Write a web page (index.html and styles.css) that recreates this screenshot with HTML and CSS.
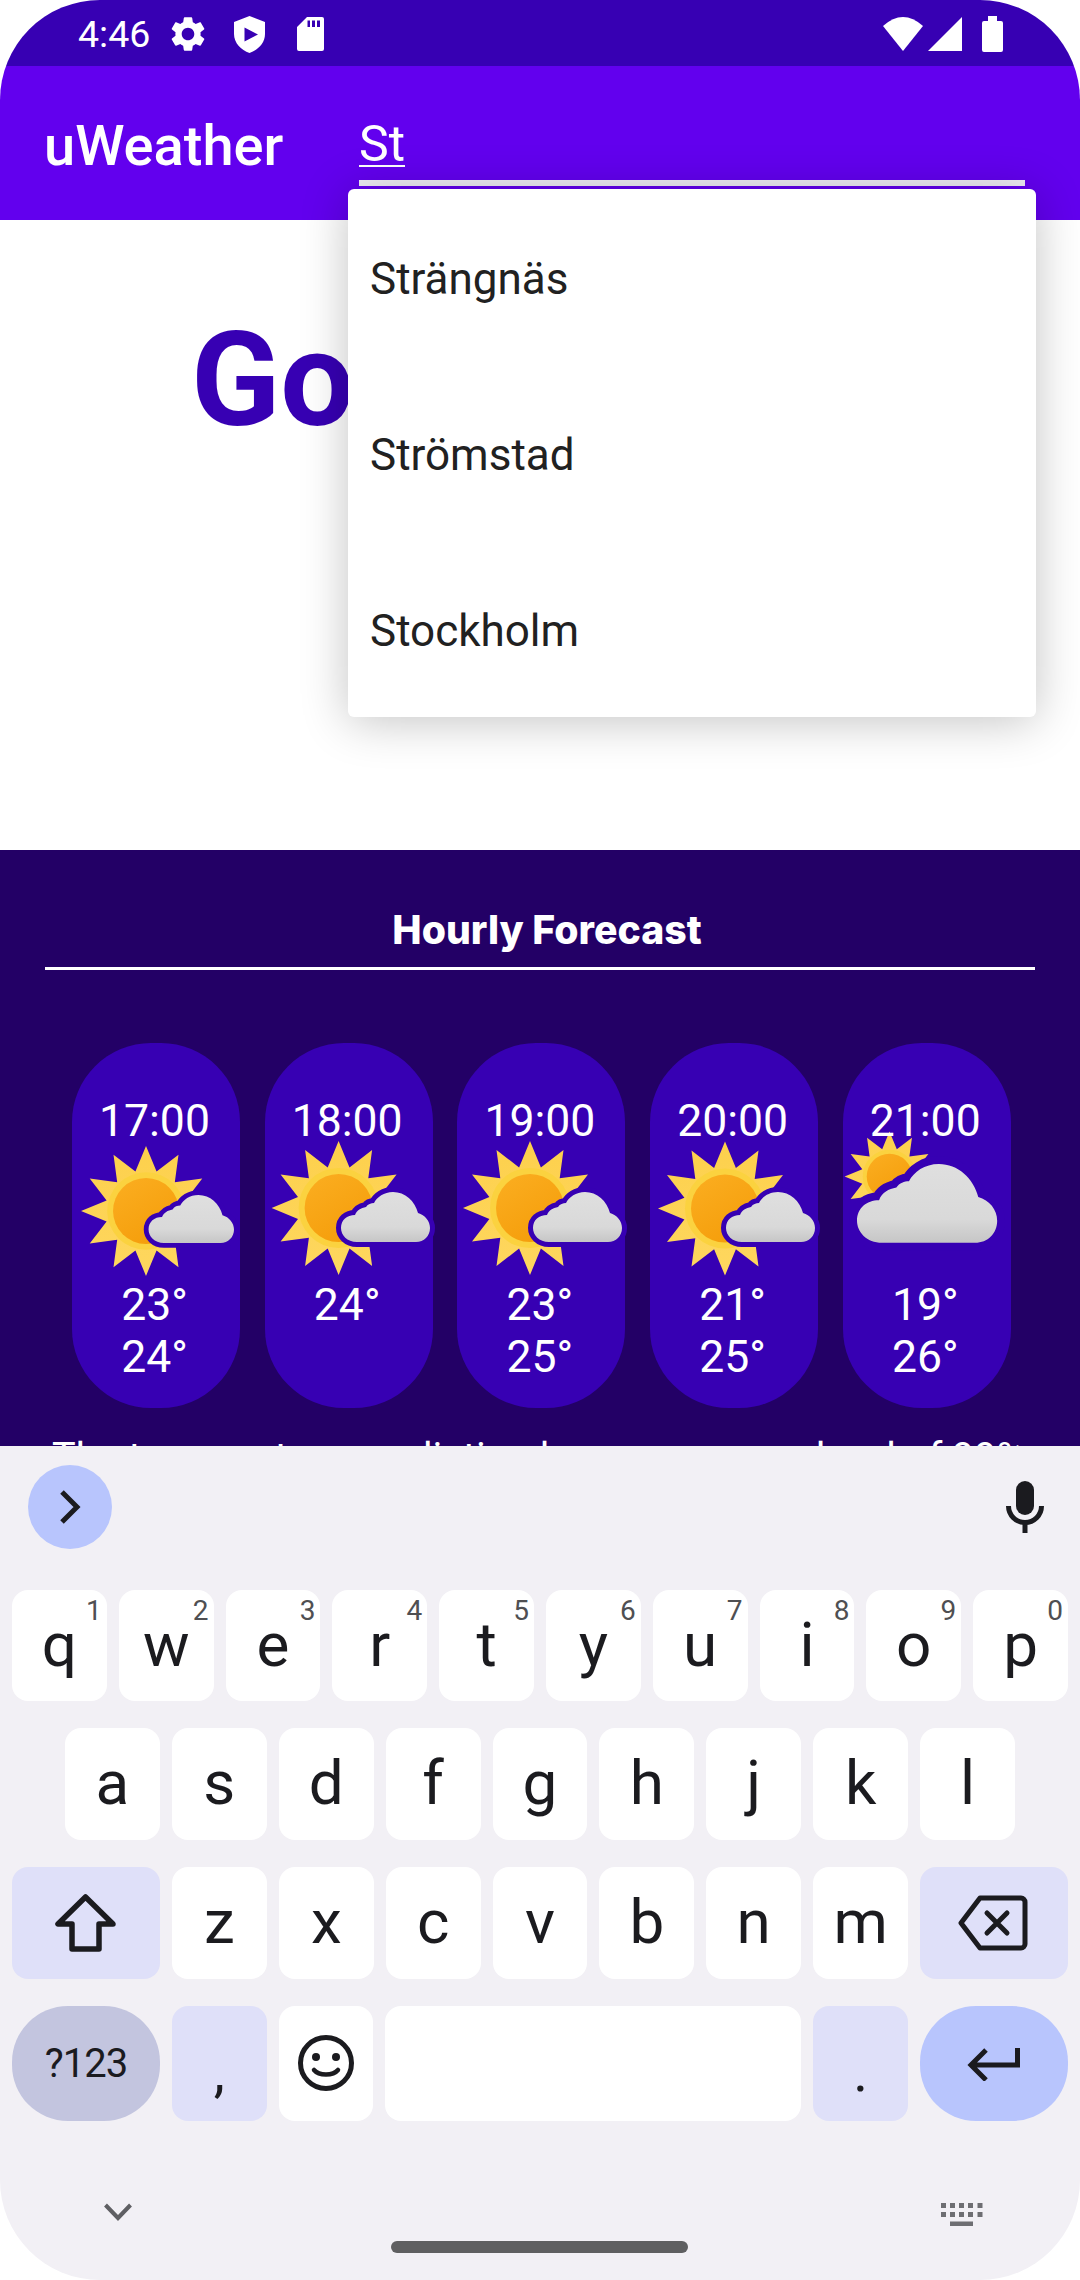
FILE: index.html
```html
<!DOCTYPE html>
<html lang="en">

<head>
  <meta charset="UTF-8">
  <meta name="viewport" content="width=device-width, initial-scale=1.0">
  <title>uWeather</title>
  <link rel="stylesheet" href="styles.css">
</head>

<body>
  <svg class="sprite" aria-hidden="true">
    <defs>
      <linearGradient id="disc" x1="0" y1="0" x2="0.6" y2="1">
        <stop offset="0" stop-color="#fbae21" />
        <stop offset="1" stop-color="#f59e0b" />
      </linearGradient>
      <linearGradient id="rays" x1="0" y1="0" x2="0" y2="1">
        <stop offset="0" stop-color="#fdd04c" />
        <stop offset="1" stop-color="#fed75f" />
      </linearGradient>
      <linearGradient id="puff" x1="0" y1="0" x2="0" y2="1">
        <stop offset="0" stop-color="#dfdfdf" />
        <stop offset="0.7" stop-color="#d9d9d9" />
        <stop offset="1" stop-color="#c6c6c6" />
      </linearGradient>
      <g id="sun">
        <polygon fill="url(#rays)" points="0,-67 10.9,-40.6 33.5,-58 29.7,-29.7 58,-33.5 40.6,-10.9 67,0 40.6,10.9 58,33.5 29.7,29.7 33.5,58 10.9,40.6 0,67 -10.9,40.6 -33.5,58 -29.7,29.7 -58,33.5 -40.6,10.9 -67,0 -40.6,-10.9 -58,-33.5 -29.7,-29.7 -33.5,-58 -10.9,-40.6" />
        <circle r="40" fill="#fbd23f" />
        <circle r="34" fill="url(#disc)" />
      </g>
      <path id="cloud" fill="url(#puff)" stroke="#3700b3" stroke-width="10" paint-order="stroke" d="M92 103C82 103 76 96 76 89C76 81 82 76 90 76C92 71 96 69 101 68C103 65 106 64 109 64C112 58 119 53 128 53C140 53 150 62 153 74C160 76 165 82 165 89C165 97 159 103 151 103Z" />
    </defs>
  </svg>

  <div class="screen">
    <div class="status-bar">
      <span class="status-time">4:46</span>
      <svg class="ic-gear" viewBox="0 0 24 24">
        <path fill="#fff" d="M19.14 12.94c.04-.3.06-.61.06-.94 0-.32-.02-.64-.07-.94l2.03-1.58c.18-.14.23-.41.12-.61l-1.92-3.32c-.12-.22-.37-.29-.59-.22l-2.39.96c-.5-.38-1.03-.7-1.62-.94l-.36-2.54c-.04-.24-.24-.41-.48-.41h-3.84c-.24 0-.43.17-.47.41l-.36 2.54c-.59.24-1.13.57-1.62.94l-2.39-.96c-.22-.08-.47 0-.59.22L2.74 8.87c-.12.21-.08.47.12.61l2.03 1.58c-.05.3-.09.63-.09.94s.02.64.07.94l-2.03 1.58c-.18.14-.23.41-.12.61l1.92 3.32c.12.22.37.29.59.22l2.39-.96c.5.38 1.03.7 1.62.94l.36 2.54c.05.24.24.41.48.41h3.84c.24 0 .44-.17.47-.41l.36-2.54c.59-.24 1.13-.56 1.62-.94l2.39.96c.22.08.47 0 .59-.22l1.92-3.32c.12-.22.07-.47-.12-.61l-2.01-1.58zM12 15.6c-1.98 0-3.6-1.62-3.6-3.6s1.62-3.6 3.6-3.6 3.6 1.62 3.6 3.6-1.62 3.6-3.6 3.6z" />
      </svg>
      <svg class="ic-shield" viewBox="0 0 31 37">
        <path fill="#fff" fill-rule="evenodd" d="M15.5 0L31 6V18C31 27 24 34 15.5 37C7 34 0 27 0 18V6ZM10.5 11.5V25.5L24 18.5Z" />
      </svg>
      <svg class="ic-sd" viewBox="0 0 27 34">
        <path fill="#fff" fill-rule="evenodd" d="M10 0H25a2 2 0 0 1 2 2V32a2 2 0 0 1-2 2H2a2 2 0 0 1-2-2V10ZM10.500 3.500V10H13V3.500ZM15 3.500V10H18V3.500ZM20 3.500V10H23V3.500Z" />
      </svg>
      <span class="status-gap"></span>
      <svg class="ic-wifi" viewBox="0 0 40 34">
        <path fill="#fff" d="M0 9Q20 -9 40 9L20 34Z" />
      </svg>
      <svg class="ic-signal" viewBox="0 0 34 34">
        <path fill="#fff" d="M34 0V34H0Z" />
      </svg>
      <svg class="ic-battery" viewBox="0 0 21 36">
        <path fill="#fff" d="M6 0H15V5H19a2 2 0 0 1 2 2V34a2 2 0 0 1-2 2H2a2 2 0 0 1-2-2V7a2 2 0 0 1 2-2H6Z" />
      </svg>
    </div>

    <header class="app-bar">
      <div class="app-title">uWeather</div>
      <div class="search-field"><span class="search-text">St</span></div>
    </header>

    <section class="greeting">
      <h1 class="greeting-text">Go</h1>
    </section>

    <section class="hourly">
      <h2 class="hourly-title">Hourly Forecast</h2>
      <div class="hour-list">
        <div class="hour-card">
          <div class="hour-time">17:00</div>
          <svg class="hour-icon" viewBox="0 0 168 148">
            <use href="#sun" transform="translate(74 72) scale(.97)" />
            <use href="#cloud" transform="translate(3.600 5.100) scale(.96)" />
          </svg>
          <div class="hour-temp">23°</div>
          <div class="hour-temp">24°</div>
        </div>
        <div class="hour-card">
          <div class="hour-time">18:00</div>
          <svg class="hour-icon" viewBox="0 0 168 148">
            <use href="#sun" transform="translate(73.600 69)" />
            <use href="#cloud" />
          </svg>
          <div class="hour-temp">24°</div>
        </div>
        <div class="hour-card">
          <div class="hour-time">19:00</div>
          <svg class="hour-icon" viewBox="0 0 168 148">
            <use href="#sun" transform="translate(73 69)" />
            <use href="#cloud" />
          </svg>
          <div class="hour-temp">23°</div>
          <div class="hour-temp">25°</div>
        </div>
        <div class="hour-card">
          <div class="hour-time">20:00</div>
          <svg class="hour-icon" viewBox="0 0 168 148">
            <use href="#sun" transform="translate(75 69.600)" />
            <use href="#cloud" />
          </svg>
          <div class="hour-temp">21°</div>
          <div class="hour-temp">25°</div>
        </div>
        <div class="hour-card">
          <div class="hour-time">21:00</div>
          <svg class="hour-icon" viewBox="0 0 168 148">
            <use href="#sun" transform="translate(46.500 37.500) scale(.67)" />
            <use href="#cloud" transform="translate(-105.700 -58.500) scale(1.575)" />
          </svg>
          <div class="hour-temp">19°</div>
          <div class="hour-temp">26°</div>
        </div>
      </div>
      <p class="hourly-note">The temperature prediction has an average level of 99%</p>
    </section>

    <ul class="suggestions">
      <li>Strängnäs</li>
      <li>Strömstad</li>
      <li>Stockholm</li>
    </ul>

    <div class="keyboard">
      <div class="kb-toolbar">
        <span class="kb-expand">
          <svg width="24" height="36" viewBox="0 0 24 36">
            <path fill="none" stroke="#1b1b1f" stroke-width="5" d="M4 3L19 18L4 33" />
          </svg>
        </span>
        <svg class="kb-mic" viewBox="0 0 38 52">
          <rect x="10" y="0" width="18" height="34" rx="9" fill="#1b1b1f" />
          <path fill="none" stroke="#1b1b1f" stroke-width="5" d="M2.500 25a16.500 16.500 0 0 0 33 0" />
          <rect x="16.500" y="40" width="5" height="12" fill="#1b1b1f" />
        </svg>
      </div>

      <div class="kb-row kb-row-first">
        <div class="key">q<sup>1</sup></div>
        <div class="key">w<sup>2</sup></div>
        <div class="key">e<sup>3</sup></div>
        <div class="key">r<sup>4</sup></div>
        <div class="key">t<sup>5</sup></div>
        <div class="key">y<sup>6</sup></div>
        <div class="key">u<sup>7</sup></div>
        <div class="key">i<sup>8</sup></div>
        <div class="key">o<sup>9</sup></div>
        <div class="key">p<sup>0</sup></div>
      </div>
      <div class="kb-row kb-row-inset">
        <div class="key">a</div>
        <div class="key">s</div>
        <div class="key">d</div>
        <div class="key">f</div>
        <div class="key">g</div>
        <div class="key">h</div>
        <div class="key">j</div>
        <div class="key">k</div>
        <div class="key">l</div>
      </div>
      <div class="kb-row">
        <div class="key key-side key-fn">
          <svg width="62" height="58" viewBox="0 0 62 58">
            <path fill="none" stroke="#1b1b1f" stroke-width="5.500" stroke-linejoin="round" d="M30.500 3L3 30H17V55H44V30H58Z" />
          </svg>
        </div>
        <div class="key">z</div>
        <div class="key">x</div>
        <div class="key">c</div>
        <div class="key">v</div>
        <div class="key">b</div>
        <div class="key">n</div>
        <div class="key">m</div>
        <div class="key key-side key-fn">
          <svg class="ic-backspace" width="70" height="56" viewBox="0 0 70 56">
            <path fill="none" stroke="#1b1b1f" stroke-width="5" stroke-linejoin="round" d="M22 3H63a4 4 0 0 1 4 4V49a4 4 0 0 1-4 4H22L3 28Z" />
            <path fill="none" stroke="#1b1b1f" stroke-width="5" stroke-linecap="round" d="M29 18L49 38M49 18L29 38" />
          </svg>
        </div>
      </div>
      <div class="kb-row kb-row-last">
        <div class="key key-side key-pill key-symbols">?123</div>
        <div class="key key-punct key-fn">,</div>
        <div class="key key-emoji">
          <svg width="58" height="58" viewBox="0 0 58 58">
            <circle cx="29" cy="29" r="25.500" fill="none" stroke="#1b1b1f" stroke-width="5" />
            <circle cx="19" cy="23" r="4" fill="#1b1b1f" />
            <circle cx="39" cy="23" r="4" fill="#1b1b1f" />
            <path fill="none" stroke="#1b1b1f" stroke-width="4.500" stroke-linecap="round" d="M17 36C22 42 36 42 41 36" />
          </svg>
        </div>
        <div class="key key-space"></div>
        <div class="key key-punct key-fn">.</div>
        <div class="key key-side key-pill key-enter">
          <svg width="54" height="34" viewBox="0 0 54 34">
            <path fill="none" stroke="#1b1b1f" stroke-width="5" d="M50.500 1V18H5M19 3L4 18L19 33" />
          </svg>
        </div>
      </div>

      <div class="kb-nav">
        <svg width="28" height="18" viewBox="0 0 28 18">
          <path fill="none" stroke="#5f5f63" stroke-width="4" d="M1.500 2L14 15L26.500 2" />
        </svg>
        <svg width="42" height="23" viewBox="0 0 42 23">
          <path fill="#6e6e72" d="M0 0h5v5H0zM9 0h5v5H9zM18 0h5v5h-5zM27 0h5v5h-5zM36.500 0h5v5h-5zM0 9h5v5H0zM9 9h5v5H9zM18 9h5v5h-5zM27 9h5v5h-5zM36.500 9h5v5h-5zM9 18.500h23V23H9z" />
        </svg>
      </div>
      <div class="home-bar"></div>
    </div>
  </div>
</body>

</html>
```
FILE: styles.css
```css
* {
  box-sizing: border-box;
}

body {
  margin: 0;
  background-color: #fff;
  font-family: Roboto, "Noto Sans", sans-serif;
}

.sprite {
  position: absolute;
  width: 0;
  height: 0;
}

.screen {
  position: relative;
  width: 1080px;
  height: 2280px;
  border-radius: 100px;
  overflow: hidden;
  background-color: #fff;
}

/* status bar */
.status-bar {
  display: flex;
  align-items: center;
  height: 66px;
  padding: 2px 77px 0 78px;
  background-color: #3700b3;
  color: #fff;
}

.status-time {
  font-size: 37.500px;
  margin-right: 17px;
}

.ic-gear {
  width: 42px;
  height: 42px;
  margin-right: 25px;
}

.ic-shield {
  width: 31px;
  height: 37px;
  margin-right: 32px;
}

.ic-sd {
  width: 27px;
  height: 34px;
}

.status-gap {
  flex: 1;
}

.ic-wifi {
  width: 40px;
  height: 34px;
  margin-right: 5px;
}

.ic-signal {
  width: 34px;
  height: 34px;
  margin-right: 20px;
}

.ic-battery {
  width: 21px;
  height: 36px;
}

/* app bar */
.app-bar {
  display: flex;
  height: 154px;
  padding-left: 44px;
  background-color: #6200ee;
  color: #fff;
}

.app-title {
  font-size: 56px;
  font-weight: 500;
  line-height: 62px;
  padding-top: 49px;
  width: 315px;
}

.search-field {
  width: 666px;
  height: 120px;
  padding-top: 57px;
  border-bottom: 6px solid #efedf5;
}

.search-text {
  display: inline-block;
  font-size: 50px;
  line-height: 42px;
  border-bottom: 2.500px solid #fff;
}

/* greeting */
.greeting {
  height: 630px;
  padding: 84px 0 0 191px;
}

.greeting-text {
  margin: 0;
  font-size: 131px;
  font-weight: 700;
  line-height: 153px;
  color: #3700b3;
}

/* hourly forecast */
.hourly {
  height: 800px;
  padding: 58px 45px 0;
  background-color: #230066;
  color: #fff;
}

.hourly-title {
  margin: 0;
  padding: 0 0 15px 14px;
  border-bottom: 3px solid #fff;
  font-family: Inter, sans-serif;
  font-size: 39.200px;
  font-weight: 800;
  line-height: 44px;
  text-align: center;
}

.hour-list {
  display: flex;
  gap: 24.700px;
  margin-top: 73px;
  padding-left: 27px;
}

.hour-card {
  width: 168px;
  height: 365px;
  padding: 52px 3px 0 0;
  border-radius: 79px;
  background-color: #3700b3;
  text-align: center;
  font-size: 44.500px;
  line-height: 52px;
}

.hour-time {
  position: relative;
  z-index: 1;
}

.hour-icon {
  display: block;
  width: 168px;
  height: 148px;
  margin: -8px 0;
  overflow: visible;
}

.hourly-note {
  margin: 26px 0 0 7px;
  font-size: 39.700px;
  line-height: 46px;
  white-space: nowrap;
}

/* dropdown */
.suggestions {
  position: absolute;
  top: 189px;
  left: 348px;
  width: 688px;
  margin: 0;
  padding: 0;
  list-style: none;
  background-color: #fff;
  border-radius: 6px;
  box-shadow: 0 4px 48px rgba(0, 0, 0, 0.24);
}

.suggestions li {
  display: flex;
  align-items: center;
  height: 176px;
  padding: 3px 0 0 22px;
  font-size: 44px;
  color: #212121;
}

/* keyboard */
.keyboard {
  position: absolute;
  left: 0;
  right: 0;
  top: 1446px;
  bottom: 0;
  padding: 0 12px;
  background-color: #f2f0f5;
  color: #1b1b1f;
}

.kb-toolbar {
  display: flex;
  align-items: center;
  justify-content: space-between;
  height: 144px;
  padding: 0 24px 22px 16px;
}

.kb-expand {
  display: flex;
  align-items: center;
  justify-content: center;
  width: 84px;
  height: 84px;
  border-radius: 50%;
  background-color: #b8c5fd;
}

.kb-mic {
  width: 38px;
  height: 52px;
}

.kb-row {
  display: flex;
  gap: 12px;
  height: 112px;
  margin-bottom: 27px;
}

.kb-row-first {
  height: 111px;
}

.kb-row-inset {
  padding: 0 53px;
}

.kb-row-last {
  height: 115px;
  margin-bottom: 0;
}

.key {
  position: relative;
  flex: 1;
  display: flex;
  align-items: center;
  justify-content: center;
  padding-bottom: 2px;
  border-radius: 16px;
  background-color: #fff;
  font-size: 62px;
  line-height: 70px;
}

.key sup {
  position: absolute;
  top: 7px;
  right: 5px;
  font-size: 28px;
  line-height: 28px;
  color: #4f4f52;
}

.key-side {
  flex: 0 0 148px;
  padding-bottom: 0;
}

.key-fn {
  background-color: #dfe0f9;
}

.key-pill {
  border-radius: 56px;
}

.key-symbols {
  background-color: #c3c5df;
  font-size: 40px;
  letter-spacing: -1px;
}

.key-enter {
  background-color: #b8c5fd;
}

.key-punct {
  align-items: flex-start;
  padding: 36px 0 0;
  font-size: 56px;
  line-height: 60px;
}

.key-space {
  flex: 0 0 416px;
}

.ic-backspace {
  margin-left: -2px;
}

.kb-nav {
  display: flex;
  justify-content: space-between;
  padding: 82px 85px 0 92px;
}

.home-bar {
  position: absolute;
  left: 391px;
  bottom: 27px;
  width: 297px;
  height: 12px;
  border-radius: 6px;
  background-color: #5f5f61;
}
```
